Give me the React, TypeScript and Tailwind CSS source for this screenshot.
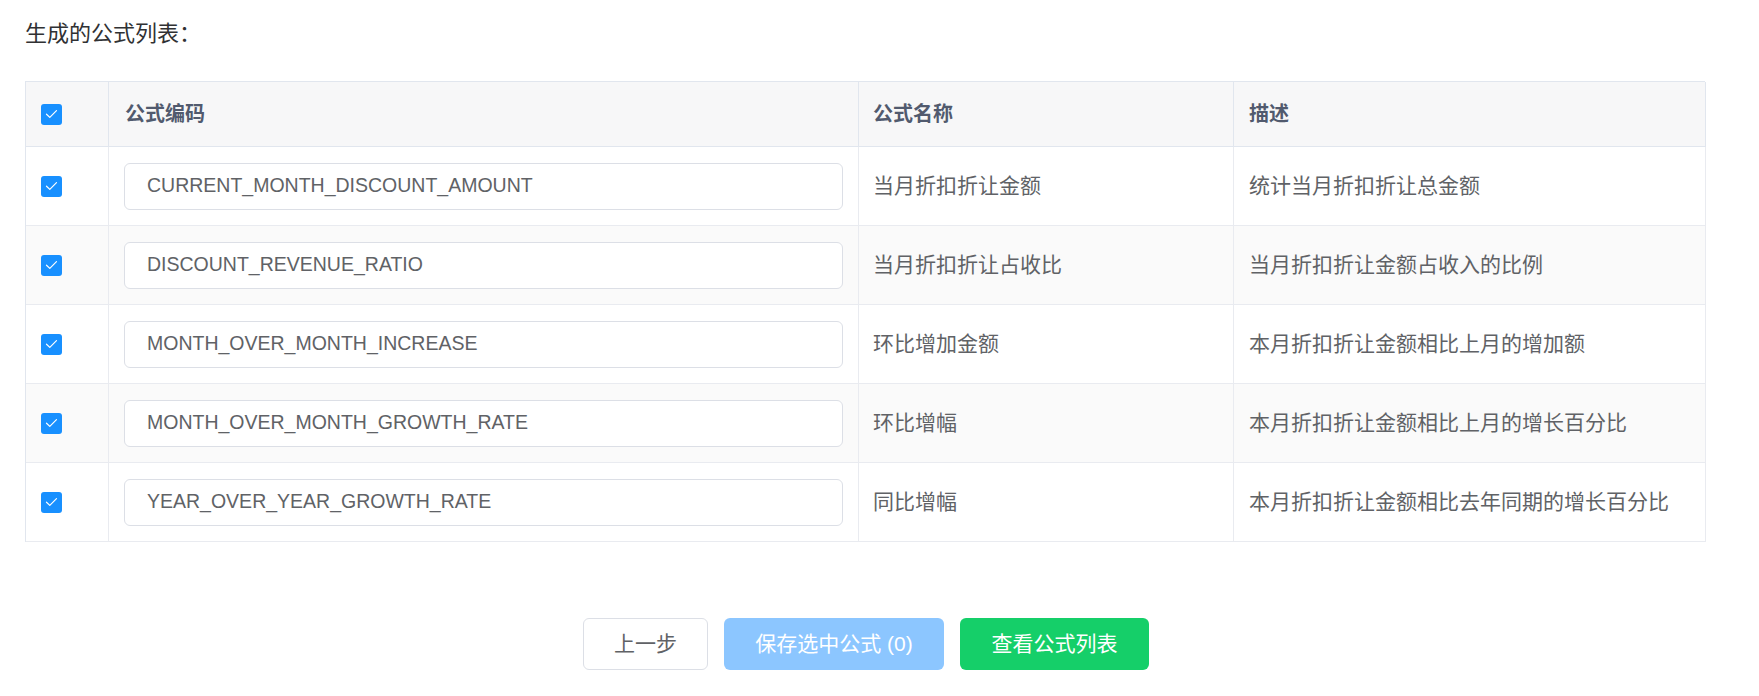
import React from 'react';

const rows = [
  { code: 'CURRENT_MONTH_DISCOUNT_AMOUNT', name: '当月折扣折让金额', desc: '统计当月折扣折让总金额' },
  { code: 'DISCOUNT_REVENUE_RATIO', name: '当月折扣折让占收比', desc: '当月折扣折让金额占收入的比例' },
  { code: 'MONTH_OVER_MONTH_INCREASE', name: '环比增加金额', desc: '本月折扣折让金额相比上月的增加额' },
  { code: 'MONTH_OVER_MONTH_GROWTH_RATE', name: '环比增幅', desc: '本月折扣折让金额相比上月的增长百分比' },
  { code: 'YEAR_OVER_YEAR_GROWTH_RATE', name: '同比增幅', desc: '本月折扣折让金额相比去年同期的增长百分比' },
];

const Check: React.FC = () => (
  <span className="flex h-[21px] w-[21px] items-center justify-center rounded-[3px] bg-[#1890ff]">
    <svg width="13" height="10" viewBox="0 0 13 10" fill="none">
      <path d="M1.5 5.2 L4.8 8.4 L11.5 1.6" stroke="white" strokeWidth="1.2" strokeLinecap="round" strokeLinejoin="round" />
    </svg>
  </span>
);

const App: React.FC = () => {
  return (
    <div
      className="min-h-[696px] bg-white pl-[25px] pt-[18px]"
      style={{ fontFamily: '"Liberation Sans", "Noto Sans CJK SC", sans-serif' }}
    >
      <div className="h-[32px] text-[22px] leading-[32px] text-[#303133]">生成的公式列表：</div>

      <div className="mt-[31px] w-[1680px] border-l border-t border-[#e1e6ee]">
        <div className="grid h-[65px] grid-cols-[83px_750px_375px_472px] bg-[#f7f7f8] text-[20px] font-bold text-[#515a6e]">
          <div className="flex items-center border-b border-r border-[#e1e6ee] pl-[15px]">
            <Check />
          </div>
          <div className="flex items-center border-b border-r border-[#e1e6ee] pl-[16px]">公式编码</div>
          <div className="flex items-center border-b border-r border-[#e1e6ee] pl-[14px]">公式名称</div>
          <div className="flex items-center border-b border-r border-[#e1e6ee] pl-[15px]">描述</div>
        </div>

        {rows.map((row, i) => (
          <div
            key={row.code}
            className={
              'grid h-[79px] grid-cols-[83px_750px_375px_472px] text-[21px] text-[#606266] ' +
              (i % 2 === 1 ? 'bg-[#fafafa]' : 'bg-white')
            }
          >
            <div className="flex items-center border-b border-r border-[#e9ebf0] pl-[15px]">
              <Check />
            </div>
            <div className="flex items-center border-b border-r border-[#e9ebf0] pl-[15px] pr-[15px]">
              <div className="flex h-[47px] w-full items-center rounded-[6px] border border-[#dcdfe6] bg-white pl-[22px] text-[19.5px] text-[#606266]">
                {row.code}
              </div>
            </div>
            <div className="flex items-center border-b border-r border-[#e9ebf0] pl-[14px]">{row.name}</div>
            <div className="flex items-center border-b border-r border-[#e9ebf0] pl-[15px]">{row.desc}</div>
          </div>
        ))}
      </div>

      <div className="mt-[76px] flex w-[1680px] justify-center gap-[16px] pl-[2px]">
        <button className="h-[52px] w-[125px] rounded-[6px] border border-[#dcdfe6] bg-white text-[21px] text-[#606266]">
          上一步
        </button>
        <button className="h-[52px] w-[220px] rounded-[6px] bg-[#8cc6ff] text-[21px] text-white">
          保存选中公式 (0)
        </button>
        <button className="h-[52px] w-[189px] rounded-[6px] bg-[#15cf69] text-[21px] text-white">
          查看公式列表
        </button>
      </div>
    </div>
  );
};

export default App;
